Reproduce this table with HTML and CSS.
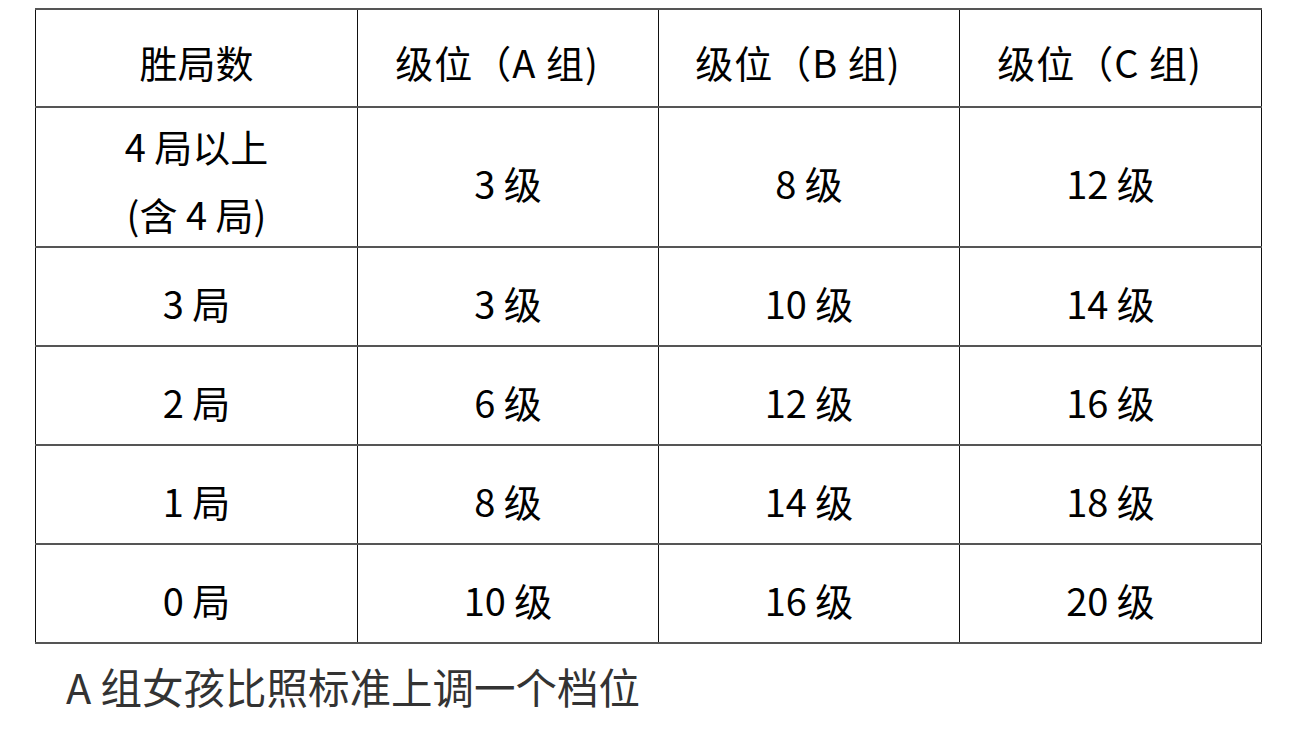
FILE: index.html
```html
<!DOCTYPE html>
<html lang="zh-CN">
<head>
<meta charset="utf-8">
<title>级位表</title>
<link rel="stylesheet" href="styles.css">
</head>
<body>
<div class="page">
  <table class="grade-table">
    <colgroup>
      <col class="c1"><col class="c2"><col class="c3"><col class="c4">
    </colgroup>
    <tr class="head">
      <td>胜局数</td>
      <td class="grp">级位（A 组)</td>
      <td class="grp">级位（B 组)</td>
      <td class="grp">级位（C 组)</td>
    </tr>
    <tr class="tall">
      <td class="multi"><div class="two-line">4 局以上<br>(含 4 局)</div></td>
      <td>3 级</td>
      <td>8 级</td>
      <td>12 级</td>
    </tr>
    <tr>
      <td>3 局</td><td>3 级</td><td>10 级</td><td>14 级</td>
    </tr>
    <tr>
      <td>2 局</td><td>6 级</td><td>12 级</td><td>16 级</td>
    </tr>
    <tr>
      <td>1 局</td><td>8 级</td><td>14 级</td><td>18 级</td>
    </tr>
    <tr>
      <td>0 局</td><td>10 级</td><td>16 级</td><td>20 级</td>
    </tr>
  </table>
  <p class="note">A 组女孩比照标准上调一个档位</p>
</div>
</body>
</html>
```

FILE: styles.css
```css
html, body {
  margin: 0;
  padding: 0;
  background: #ffffff;
}

body {
  font-family: "Noto Sans CJK SC", "Noto Sans", sans-serif;
  color: #000;
}

.page {
  padding: 8px 0 0 35px;
}

.grade-table {
  border-collapse: collapse;
  table-layout: fixed;
  width: 1226px;
  font-size: 38px;
}

.c1 { width: 322px; }
.c2 { width: 301px; }
.c3 { width: 301px; }
.c4 { width: 302px; }

.grade-table tr {
  height: 99px;
}

.grade-table tr.head {
  height: 98px;
}

.grade-table tr.tall {
  height: 140px;
}

.grade-table td {
  padding: 12px 0 0 0;
  text-align: center;
  vertical-align: middle;
  line-height: 1;
  border-left: 1px solid #111;
  border-right: 1px solid #111;
  border-top: 2px solid #555;
  border-bottom: 2px solid #555;
}

.grade-table tr.head td {
  padding-top: 8px;
}

.grade-table td.grp {
  padding-right: 22px;
  letter-spacing: 1px;
}

.grade-table td.multi {
  padding-top: 0;
}

.two-line {
  line-height: 68px;
  margin: 3px 0 -3px;
}

.note {
  margin: 12px 0 0 31px;
  font-size: 41.5px;
  color: #333;
  line-height: 1.45;
}
```
